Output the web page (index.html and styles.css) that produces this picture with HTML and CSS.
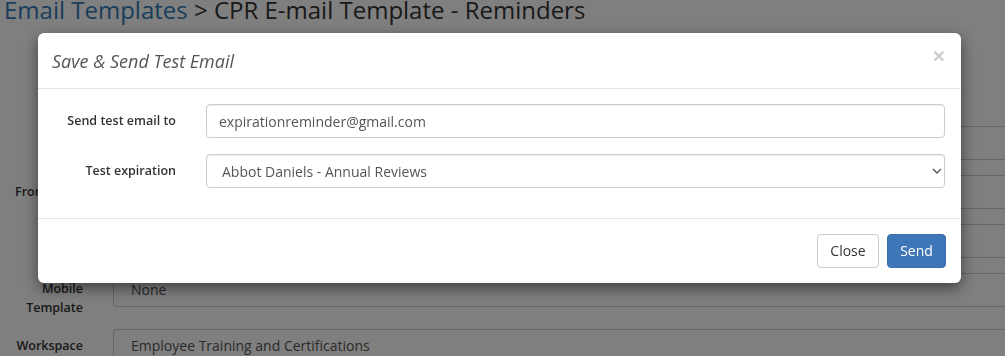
FILE: index.html
```html
<!DOCTYPE html>
<html lang="en">
<head>
    <meta charset="UTF-8">
    <meta name="viewport" content="width=device-width, initial-scale=1.0">
    <title>CPR E-mail Template - Reminders</title>
    <link rel="stylesheet" href="styles.css">
</head>
<body>
    <div class="page">
        <h1 class="page-title"><a href="#">Email Templates</a> &gt; CPR E-mail Template - Reminders</h1>

        <form class="template-form">
            <div class="form-row">
                <label>Name</label>
                <div class="field">CPR E-mail Template - Reminders</div>
            </div>
            <div class="form-row">
                <label>From Email</label>
                <div class="field">expirationreminder@gmail.com</div>
            </div>
            <div class="form-row">
                <label>BCC</label>
                <div class="field"></div>
            </div>
            <div class="form-row tall">
                <label>Mobile Template</label>
                <div class="field">None</div>
            </div>
            <div class="form-row">
                <label>Workspace</label>
                <div class="field">Employee Training and Certifications</div>
            </div>
        </form>
    </div>

    <!-- Modal backdrop -->
    <div class="backdrop"></div>

    <div class="modal">
        <div class="modal-header">
            <h4 class="modal-title">Save &amp; Send Test Email</h4>
            <button type="button" class="close">&times;</button>
        </div>
        <div class="modal-body">
            <div class="modal-row">
                <label for="test-email">Send test email to</label>
                <input type="text" id="test-email" value="expirationreminder@gmail.com">
            </div>
            <div class="modal-row">
                <label for="test-expiration">Test expiration</label>
                <div class="select-wrap">
                    <select id="test-expiration">
                        <option>Abbot Daniels - Annual Reviews</option>
                    </select>
                    <svg class="chevron" width="10" height="6" viewBox="0 0 10 6">
                        <path d="M1 1 L5 5 L9 1" fill="none" stroke="#555" stroke-width="1.4"/>
                    </svg>
                </div>
            </div>
        </div>
        <div class="modal-footer">
            <button type="button" class="btn btn-default">Close</button>
            <button type="button" class="btn btn-primary">Send</button>
        </div>
    </div>
</body>
</html>
```

FILE: styles.css
```css
/* General Reset */
* {
    margin: 0;
    padding: 0;
    box-sizing: border-box;
}

body {
    font-family: "Open Sans", "Noto Sans", sans-serif;
    font-size: 14px;
    color: #333;
    background-color: #ffffff;
    overflow: hidden;
    height: 356px;
}

/* Page behind the modal */
.page {
    padding: 0 0 0 4px;
}

.page-title {
    font-size: 24px;
    font-weight: normal;
    line-height: 26px;
    margin-top: -3px;
    white-space: nowrap;
}

.page-title a {
    color: #337ab7;
    text-decoration: none;
}

.template-form {
    margin-top: 103px;
    width: 1100px;
}

.form-row {
    display: grid;
    grid-template-columns: 79px 1fr;
    column-gap: 30px;
    margin-bottom: 15px;
}

.form-row.tall {
    margin-bottom: 12px;
}

.form-row label {
    font-size: 12.5px;
    font-weight: 600;
    text-align: right;
    padding-top: 7px;
    line-height: 19px;
}

.form-row.tall label {
    padding-top: 6px;
}

.field {
    height: 34px;
    border: 1px solid #ccc;
    border-radius: 4px;
    padding: 6px 17px;
    line-height: 20px;
    color: #555;
}

/* Modal */
.backdrop {
    position: fixed;
    inset: 0;
    background-color: rgba(0, 0, 0, 0.5);
}

.modal {
    position: fixed;
    top: 33px;
    left: 38px;
    width: 923px;
    background-color: #fff;
    border-radius: 6px;
    box-shadow: 0 5px 15px rgba(0, 0, 0, 0.5);
}

.modal-header {
    display: flex;
    justify-content: space-between;
    align-items: center;
    height: 56px;
    padding: 0 15px 0 14px;
    border-bottom: 1px solid #e5e5e5;
}

.modal-title {
    font-size: 18px;
    font-weight: normal;
    font-style: italic;
    color: #555;
}

.close {
    background: none;
    border: none;
    font-family: "Liberation Sans", Arial, sans-serif;
    font-size: 21px;
    font-weight: bold;
    line-height: 1;
    color: #000;
    opacity: 0.2;
    margin-top: -10px;
    margin-right: 1px;
}

.modal-body {
    padding: 15px 15px 15px;
}

.modal-row {
    display: grid;
    grid-template-columns: 123px 1fr;
    column-gap: 30px;
    margin-bottom: 16px;
}

.modal-row:last-child {
    margin-bottom: 15px;
}

.modal-row label {
    font-size: 12.5px;
    font-weight: 600;
    text-align: right;
    padding-top: 7px;
    line-height: 19px;
}

.modal-row input,
.modal-row select {
    width: 739px;
    height: 34px;
    border: 1px solid #ccc;
    border-radius: 4px;
    padding: 6px 12px;
    font-family: inherit;
    font-size: 14px;
    color: #555;
    background-color: #fff;
    box-shadow: inset 0 1px 1px rgba(0, 0, 0, 0.075);
}

.modal-row select {
    -webkit-appearance: none;
    appearance: none;
    padding-left: 15px;
}

.select-wrap {
    position: relative;
}

.chevron {
    position: absolute;
    left: 726px;
    top: 14px;
}

.modal-footer {
    display: flex;
    justify-content: flex-end;
    gap: 8px;
    padding: 15px 15px 15px;
    border-top: 1px solid #e5e5e5;
}

.btn {
    height: 34px;
    padding: 6px 12px;
    font-family: inherit;
    font-size: 14px;
    line-height: 20px;
    border-radius: 4px;
    border: 1px solid transparent;
}

.btn-default {
    width: 62px;
    background-color: #fff;
    border-color: #ccc;
    color: #333;
}

.btn-primary {
    width: 59px;
    background-color: #3e76b7;
    border-color: #3a6fad;
    color: #fff;
}
```
